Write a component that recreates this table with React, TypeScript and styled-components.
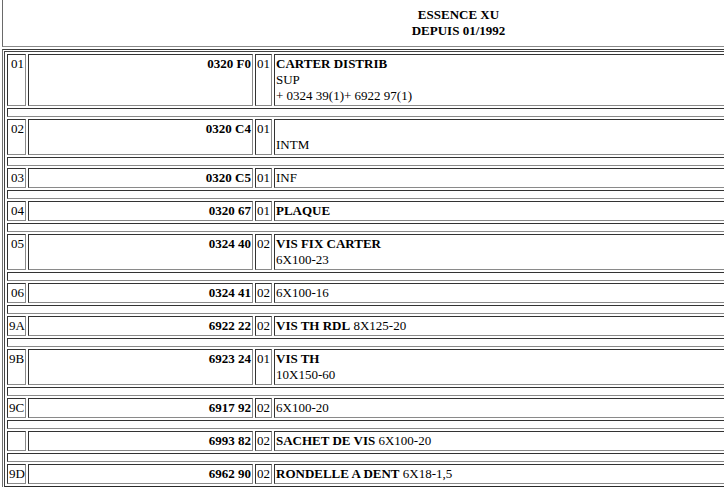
import { Fragment } from "react";
import styled, { createGlobalStyle } from "styled-components";

interface Part {
  ref: string;
  num: string;
  qty: string;
  lines: [string, string][];
}

const parts: Part[] = [
  {
    ref: "01",
    num: "0320 F0",
    qty: "01",
    lines: [
      ["CARTER DISTRIB", ""],
      ["", "SUP"],
      ["", "+ 0324 39(1)+ 6922 97(1)"],
    ],
  },
  { ref: "02", num: "0320 C4", qty: "01", lines: [["", ""], ["", "INTM"]] },
  { ref: "03", num: "0320 C5", qty: "01", lines: [["", "INF"]] },
  { ref: "04", num: "0320 67", qty: "01", lines: [["PLAQUE", ""]] },
  {
    ref: "05",
    num: "0324 40",
    qty: "02",
    lines: [["VIS FIX CARTER", ""], ["", "6X100-23"]],
  },
  { ref: "06", num: "0324 41", qty: "02", lines: [["", "6X100-16"]] },
  { ref: "9A", num: "6922 22", qty: "02", lines: [["VIS TH RDL", " 8X125-20"]] },
  {
    ref: "9B",
    num: "6923 24",
    qty: "01",
    lines: [["VIS TH", ""], ["", "10X150-60"]],
  },
  { ref: "9C", num: "6917 92", qty: "02", lines: [["", "6X100-20"]] },
  { ref: "", num: "6993 82", qty: "02", lines: [["SACHET DE VIS", " 6X100-20"]] },
  {
    ref: "9D",
    num: "6962 90",
    qty: "02",
    lines: [["RONDELLE A DENT", " 6X18-1,5"]],
  },
];

const GlobalStyle = createGlobalStyle`
  html, body {
    margin: 0;
    padding: 0;
    background: #fff;
    overflow: hidden;
  }
  body {
    font-family: "Liberation Serif", "Times New Roman", serif;
    font-size: 13px;
    line-height: 16px;
    color: #000;
  }
`;

const Page = styled.div`
  width: 913px;
  padding-left: 2px;
  display: flex;
  flex-direction: column;
  gap: 2px;
`;

const Header = styled.div`
  box-sizing: border-box;
  height: 47px;
  padding-top: 7px;
  border-left: 1px solid #6a6a6a;
  border-right: 1px solid #6a6a6a;
  border-bottom: 1px solid #8a8a8a;
  text-align: center;
  font-weight: bold;
`;

const ListFrame = styled.div`
  padding: 1px;
  border: 1px solid #6e6e6e;
  border-top-color: #3a3a3a;
`;

const PartsTable = styled.table`
  width: 100%;
  table-layout: fixed;
  border-collapse: separate;
  border-spacing: 2px;
  border: 1px solid;
  border-color: #444 #2a2a2a #2a2a2a #444;
  font-size: 13px;
  line-height: 16px;
`;

const Cell = styled.td<{ $w?: number; $align?: string; $bold?: boolean }>`
  box-sizing: border-box;
  ${({ $w }) => ($w ? `width: ${$w}px;` : "")}
  padding: 1px;
  vertical-align: top;
  text-align: ${({ $align }) => $align || "left"};
  font-weight: ${({ $bold }) => ($bold ? "bold" : "normal")};
  border: 1px solid;
  border-color: #333 #8a8a8a #8a8a8a #333;
  white-space: nowrap;
  overflow: hidden;
`;

const SpacerCell = styled.td`
  box-sizing: border-box;
  height: 9px;
  padding: 0;
  border: 1px solid;
  border-color: #333 #8a8a8a #8a8a8a #333;
`;

const Line = styled.div`
  min-height: 16px;
`;

const Strong = styled.b`
  font-weight: bold;
`;

export default function App() {
  return (
    <>
      <GlobalStyle />
      <Page>
        <Header>
          ESSENCE XU
          <br />
          DEPUIS 01/1992
        </Header>
        <ListFrame>
          <PartsTable>
            <tbody>
              {parts.map((p, i) => (
                <Fragment key={i}>
                  {i > 0 && (
                    <tr>
                      <SpacerCell colSpan={4} />
                    </tr>
                  )}
                  <tr>
                    <Cell $w={19} $align="right">
                      {p.ref}
                    </Cell>
                    <Cell $w={225} $align="right" $bold>
                      {p.num}
                    </Cell>
                    <Cell $w={17}>{p.qty}</Cell>
                    <Cell>
                      {p.lines.map(([b, t], j) => (
                        <Line key={j}>
                          {b && <Strong>{b}</Strong>}
                          {t}
                        </Line>
                      ))}
                    </Cell>
                  </tr>
                </Fragment>
              ))}
            </tbody>
          </PartsTable>
        </ListFrame>
      </Page>
    </>
  );
}
